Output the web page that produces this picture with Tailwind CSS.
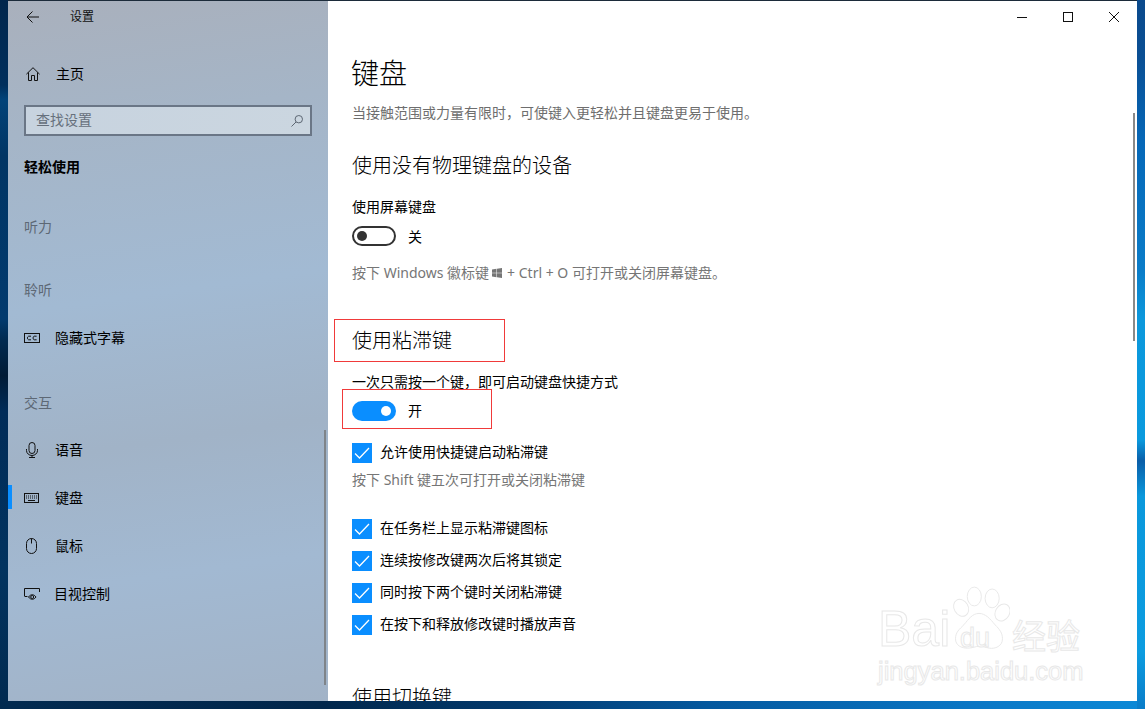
<!DOCTYPE html>
<html lang="zh-CN">
<head>
<meta charset="utf-8">
<title>设置</title>
<script src="https://cdn.jsdelivr.net/npm/@tailwindcss/browser@4"></script>
</head>
<body class="overflow-hidden">
<div class="flex h-[709px] w-[1145px] overflow-hidden font-['Noto_Sans','Noto_Sans_CJK_SC',sans-serif] text-[14px] leading-[20px] text-black">
  <div class="w-[8px] shrink-0 bg-[linear-gradient(180deg,#01264c_0%,#012f5c_12%,#024379_14%,#013564_22%,#023a6e_45%,#012a50_48%,#011b36_53%,#012c58_58%,#02335f_80%,#012a50_100%)]"></div>
  <div class="flex w-[1129px] shrink-0 flex-col">
    <div class="h-[1px] shrink-0 bg-[#1c2b3a]"></div>
    <div class="relative flex h-[700px] shrink-0 overflow-hidden">
      <aside class="relative flex w-[320px] shrink-0 flex-col bg-[linear-gradient(172deg,#a9b0bc_0%,#a5b5c7_18%,#a2bad3_42%,#a1b3c7_62%,#a2b9d2_80%,#a2b3c7_100%)]">
        <div class="flex h-[32px] shrink-0 items-center">
          <svg class="ml-[18px] h-[12px] w-[13px]" viewBox="0 0 13 12" fill="none" stroke="#111" stroke-width="1"><path d="M13 6H1M6.5.5 1 6l5.5 5.5"/></svg>
          <span class="ml-[31px] text-[12px] text-[#111]">设置</span>
        </div>
        <div class="mt-[31px] flex h-[20px] shrink-0 items-center pl-[18px]">
          <svg class="h-[14px] w-[14px]" viewBox="0 0 14 14" fill="none" stroke="#111" stroke-width="1"><path d="M.4 7.2 7 .7l6.6 6.5M2.5 5.4v8.1h3v-5h3v5h3V5.4"/></svg>
          <span class="ml-[16px]">主页</span>
        </div>
        <div class="mt-[21px] ml-[16px] flex h-[31px] w-[288px] shrink-0 items-center justify-between border-2 border-[#6a7686] bg-[linear-gradient(90deg,#c7d3df,#cbd6e0)] pl-[10px] pr-[7px]">
          <span class="pb-[2px] text-[#66707c]">查找设置</span>
          <svg class="h-[12px] w-[12px]" viewBox="0 0 12 12" fill="none" stroke="#5c6672" stroke-width="1"><circle cx="7.800" cy="4.200" r="3.700"/><path d="M5 7 .5 11.500"/></svg>
        </div>
        <div class="mt-[21px] pl-[16px] font-bold">轻松使用</div>
        <div class="mt-[40px] pl-[16px] text-[#5d6875]">听力</div>
        <div class="mt-[43px] pl-[16px] text-[#5d6875]">聆听</div>
        <div class="mt-[28px] flex h-[20px] items-center pl-[16px]">
          <svg class="h-[10px] w-[16px]" viewBox="0 0 16 10" fill="none" stroke="#111" stroke-width="1"><rect x=".5" y=".5" width="15" height="9"/><path d="M7 3.200H4.600L3.500 4.200v1.600l1.100 1H7M12.600 3.200h-2.400l-1.100 1v1.600l1.100 1h2.400"/></svg>
          <span class="ml-[15px]">隐藏式字幕</span>
        </div>
        <div class="mt-[45px] pl-[16px] text-[#5d6875]">交互</div>
        <div class="mt-[13px] flex h-[48px] items-center pl-[18px]">
          <svg class="h-[16px] w-[12px]" viewBox="0 0 12 16" fill="none" stroke="#111" stroke-width="1"><rect x="3" y=".5" width="6" height="11" rx="3"/><path d="M.5 7v1.500a5.500 5 0 0 0 11 0V7M6 13.500v2M3 15.500h6"/></svg>
          <span class="ml-[17px]">语音</span>
        </div>
        <div class="relative flex h-[48px] items-center pl-[16px]">
          <span class="absolute left-0 top-[11px] h-[24px] w-[4px] bg-[#0a8eff]"></span>
          <svg class="h-[10px] w-[15px]" viewBox="0 0 15 10" fill="none" stroke="#111" stroke-width="1"><rect x=".5" y=".5" width="14" height="9"/><path d="M2 3h11M2 5h11" stroke-dasharray="1 1"/><path d="M4 7.500h7"/></svg>
          <span class="ml-[16px]">键盘</span>
        </div>
        <div class="flex h-[48px] items-center pl-[18px]">
          <svg class="h-[16px] w-[11px]" viewBox="0 0 11 16" fill="none" stroke="#111" stroke-width="1"><rect x=".5" y=".5" width="10" height="15" rx="5"/><path d="M5.500.5v5"/></svg>
          <span class="ml-[18px]">鼠标</span>
        </div>
        <div class="flex h-[48px] items-center pl-[16px]">
          <svg class="h-[12px] w-[16px]" viewBox="0 0 16 12" fill="none" stroke="#111" stroke-width="1"><path d="M.5 8V.5h15V4M.5 8.500h3"/><path d="M4.500 9c2-3 5.500-3 7.500 0-2 3-5.500 3-7.500 0z"/><circle cx="8.200" cy="9" r="1.500"/></svg>
          <span class="ml-[14px]">目视控制</span>
        </div>
        <span class="absolute right-[2px] top-[429px] h-[255px] w-[2px] bg-[#7f8489]"></span>
      </aside>

      <main class="relative flex-1 overflow-hidden bg-white pl-[24px]">
        <div class="-ml-[24px] flex h-[32px] justify-end">
          <span class="flex w-[46px] items-center justify-center"><svg class="h-[10px] w-[10px]" viewBox="0 0 10 10" stroke="#111" stroke-width="1"><path d="M0 5.500h10"/></svg></span>
          <span class="flex w-[46px] items-center justify-center"><svg class="h-[10px] w-[10px]" viewBox="0 0 10 10" fill="none" stroke="#111" stroke-width="1"><rect x=".5" y=".5" width="9" height="9"/></svg></span>
          <span class="flex w-[46px] items-center justify-center"><svg class="h-[10px] w-[10px]" viewBox="0 0 10 10" stroke="#111" stroke-width="1"><path d="m0 0 10 10M10 0 0 10"/></svg></span>
        </div>
        <h1 class="mt-[20px] -ml-[1px] text-[28px] font-light leading-[40px] text-black">键盘</h1>
        <p class="mt-[10px] text-[#6e6e6e]">当接触范围或力量有限时，可使键入更轻松并且键盘更易于使用。</p>
        <h2 class="mt-[28px] text-[20px] font-light leading-[30px] text-black">使用没有物理键盘的设备</h2>
        <p class="mt-[16px]">使用屏幕键盘</p>
        <div class="mt-[9px] flex h-[20px] items-center">
          <span class="flex h-[20px] w-[44px] items-center rounded-full border-2 border-[#333] pl-[3px]"><span class="h-[10px] w-[10px] rounded-full bg-[#333]"></span></span>
          <span class="ml-[12px] pt-[2px]">关</span>
        </div>
        <p class="mt-[17px] flex items-center text-[#767676]"><span>按下 Windows 徽标键</span><svg class="ml-[3px] mr-[5px] h-[10px] w-[10px]" viewBox="0 0 10 10" fill="#767676"><path d="M0 1.400 4.500.8v3.900H0zM5 .7 10 0v4.700H5zM0 5.300h4.500v3.900L0 8.600zM5 5.300h5V10l-5-.7z"/></svg><span>+ Ctrl + O 可打开或关闭屏幕键盘。</span></p>
        <h2 class="mt-[43px] text-[20px] font-light leading-[30px] text-black">使用粘滞键</h2>
        <p class="mt-[16px]">一次只需按一个键，即可启动键盘快捷方式</p>
        <div class="mt-[9px] flex h-[20px] items-center">
          <span class="flex h-[20px] w-[44px] items-center justify-end rounded-full bg-[#0a8eff] pr-[5px]"><span class="h-[10px] w-[10px] rounded-full bg-white"></span></span>
          <span class="ml-[12px]">开</span>
        </div>
        <label class="mt-[22px] flex h-[20px] items-center">
          <svg class="h-[20px] w-[20px]" viewBox="0 0 20 20"><rect width="20" height="20" fill="#0a8eff"/><path d="m3 10.500 4.500 4.500L17 5" fill="none" stroke="#fff" stroke-width="1.300"/></svg>
          <span class="ml-[8px] pb-[2px]">允许使用快捷键启动粘滞键</span>
        </label>
        <p class="mt-[7px] text-[#767676]">按下 Shift 键五次可打开或关闭粘滞键</p>
        <label class="mt-[29px] flex h-[20px] items-center">
          <svg class="h-[20px] w-[20px]" viewBox="0 0 20 20"><rect width="20" height="20" fill="#0a8eff"/><path d="m3 10.500 4.500 4.500L17 5" fill="none" stroke="#fff" stroke-width="1.300"/></svg>
          <span class="ml-[8px] pb-[2px]">在任务栏上显示粘滞键图标</span>
        </label>
        <label class="mt-[12px] flex h-[20px] items-center">
          <svg class="h-[20px] w-[20px]" viewBox="0 0 20 20"><rect width="20" height="20" fill="#0a8eff"/><path d="m3 10.500 4.500 4.500L17 5" fill="none" stroke="#fff" stroke-width="1.300"/></svg>
          <span class="ml-[8px] pb-[2px]">连续按修改键两次后将其锁定</span>
        </label>
        <label class="mt-[12px] flex h-[20px] items-center">
          <svg class="h-[20px] w-[20px]" viewBox="0 0 20 20"><rect width="20" height="20" fill="#0a8eff"/><path d="m3 10.500 4.500 4.500L17 5" fill="none" stroke="#fff" stroke-width="1.300"/></svg>
          <span class="ml-[8px] pb-[2px]">同时按下两个键时关闭粘滞键</span>
        </label>
        <label class="mt-[12px] flex h-[20px] items-center">
          <svg class="h-[20px] w-[20px]" viewBox="0 0 20 20"><rect width="20" height="20" fill="#0a8eff"/><path d="m3 10.500 4.500 4.500L17 5" fill="none" stroke="#fff" stroke-width="1.300"/></svg>
          <span class="ml-[8px] pb-[2px]">在按下和释放修改键时播放声音</span>
        </label>
        <h2 class="mt-[48px] text-[20px] font-light leading-[30px] text-black">使用切换键</h2>

        <span class="absolute right-[2px] top-[112px] h-[228px] w-[2px] bg-[#8a8a8a]"></span>
        <span class="absolute left-[6px] top-[318px] h-[43px] w-[171px] border border-[#f03a3a]"></span>
        <span class="absolute left-[14px] top-[388px] h-[40px] w-[150px] border border-[#f03a3a]"></span>

        <div class="pointer-events-none absolute left-[550px] top-[585px] h-[100px] w-[210px]">
          <span class="absolute left-0 top-[18px] font-['Liberation_Sans',sans-serif] text-[50px] leading-[50px] text-white [-webkit-text-stroke:1px_#e8e8e8]">Bai</span>
          <svg class="absolute left-[70px] top-0 h-[68px] w-[62px]" viewBox="0 0 66 70" fill="#fff" stroke="#e8e8e8" stroke-width="1">
            <ellipse cx="14" cy="22" rx="7.500" ry="9.500" transform="rotate(-30 14 22)"/>
            <ellipse cx="28" cy="10" rx="7.500" ry="10"/>
            <ellipse cx="47" cy="12" rx="7.500" ry="10"/>
            <ellipse cx="58" cy="27" rx="7.500" ry="9.500" transform="rotate(30 58 27)"/>
            <path d="M33 28c7 0 12 6 17 12 5 5 8 9 8 15 0 8-8 11-14 10-5-1-7-2-11-2s-7 2-12 2c-7 0-13-3-13-10 0-7 4-10 9-15 5-6 9-12 16-12z"/>
          </svg>
          <span class="absolute left-[82px] top-[37px] font-['Liberation_Sans',sans-serif] text-[27px] leading-[30px] text-white [-webkit-text-stroke:1px_#e8e8e8]">du</span>
          <span class="absolute left-[134px] top-[30px] font-['Noto_Sans_CJK_SC',sans-serif] text-[34px] leading-[38px] text-white [-webkit-text-stroke:1px_#e8e8e8]">经验</span>
          <span class="absolute left-0 top-[70px] font-['Liberation_Sans',sans-serif] text-[25.500px] leading-[30px] whitespace-nowrap text-white [-webkit-text-stroke:1px_#e8e8e8]">jingyan.baidu.com</span>
        </div>
      </main>
    </div>
    <div class="h-[8px] shrink-0 bg-[linear-gradient(90deg,#022a50_0%,#01274c_28%,#023a6e_45%,#04589e_62%,#0a76c4_85%,#0a88d6_100%)]"></div>
  </div>
  <div class="w-[8px] shrink-0 bg-[linear-gradient(180deg,#0b4a8c_0%,#0a4f94_8%,#0668b8_20%,#0a7cc8_38%,#0c98dc_45%,#0a9ade_62%,#0a5ea8_65%,#0a98dc_70%,#0c9ce0_92%,#0a7cc8_100%)]"></div>
</div>
</body>
</html>
